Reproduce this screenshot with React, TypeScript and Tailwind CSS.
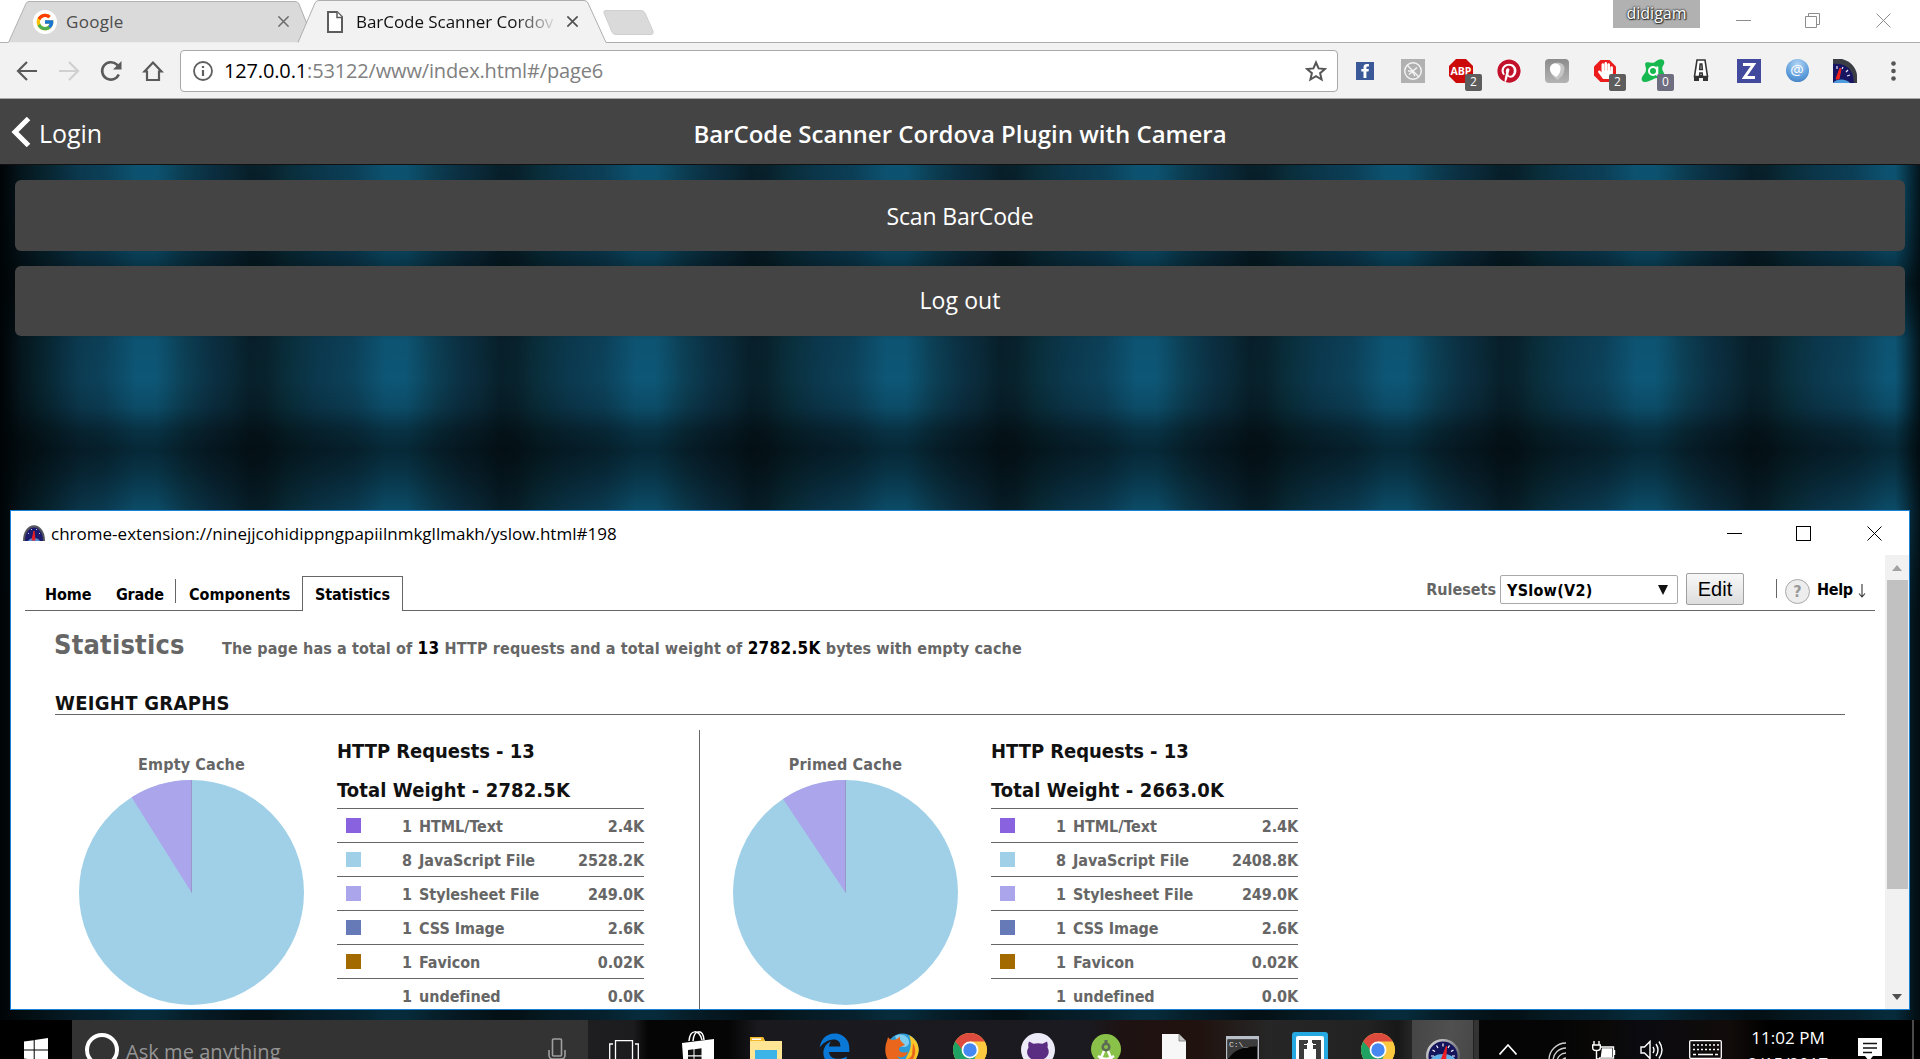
import type { ReactNode } from "react";
import { FcGoogle } from "react-icons/fc";
import { FaEdgeLegacy, FaPinterest, FaHandPaper } from "react-icons/fa";

/* ---------- shared drawings ---------- */

function Gauge({ className, id }: { className?: string; id: string }) {
  return (
    <svg viewBox="0 0 34 34" className={className}>
      <defs>
        <linearGradient id={id} x1="0" y1="0" x2="1" y2="1">
          <stop offset="0" stopColor="#e8e8e8" />
          <stop offset="0.5" stopColor="#8b8d92" />
          <stop offset="1" stopColor="#3b3d44" />
        </linearGradient>
      </defs>
      <circle cx="17" cy="17" r="17" fill={`url(#${id})`} />
      <circle cx="17" cy="17" r="14.5" fill="#14145c" />
      <path d="M4 23a13 8 0 0 1 26 0a14 14 0 0 1-26 0z" fill="#5fb0e6" />
      <g stroke="#fff" strokeWidth="1.2">
        <path d="M5 17h3M6.500 11l2.500 1.500M10.500 6.500l1.500 2.500M17 4.500v3M23.500 6.500l-1.500 2.500M27.500 11l-2.500 1.500M29 17h-3" />
      </g>
      <path d="M15.500 20L20.500 7l-.8 13z" fill="#f01c24" stroke="#f01c24" />
    </svg>
  );
}

function ChromeLogo({ className }: { className?: string }) {
  return (
    <svg viewBox="0 0 34 34" className={className}>
      <circle cx="17" cy="17" r="17" fill="#fbc93f" />
      <path d="M17 17L2.300 8.500A17 17 0 0 0 17 34l7.400-12.800z" fill="#1ea362" />
      <path d="M17 17H9.600L2.300 8.500A17 17 0 0 1 31.700 8.500H17z" fill="#dd4b3e" />
      <path d="M17 9.500h15.200A17 17 0 0 1 17 34l7-13z" fill="#fbc93f" />
      <circle cx="17" cy="17" r="8.400" fill="#fff" />
      <circle cx="17" cy="17" r="6.700" fill="#4688f1" />
    </svg>
  );
}

function Cross({ className, width = 1 }: { className?: string; width?: number }) {
  return (
    <svg viewBox="0 0 15 15" fill="none" stroke="currentColor" strokeWidth={width} className={className}>
      <path d="M.5.5l14 14M14.500.5l-14 14" />
    </svg>
  );
}

/* ---------- browser chrome ---------- */

function TabStrip() {
  return (
    <div className="relative flex h-[43px] shrink-0 bg-white">
      <svg viewBox="0 0 1920 43" className="absolute left-0 top-0 h-[43px] w-[1920px]" fill="none">
        <path d="M0 42.500H8.500L26 3.500Q27 1.500 29 1.500H295Q298 1.500 299 4L316 42.500Z" fill="#dadada" />
        <path d="M0 42.500H8.500L26 3.500Q27 1.500 29 1.500H295Q298 1.500 299 4L308 27" stroke="#b2b2b2" />
        <path d="M298 43L315 3Q316 .5 319 .5H584Q587 .5 588 3L606 42.500V43Z" fill="#f2f2f2" />
        <path d="M298 42.500L315 3Q316 .5 319 .5H584Q587 .5 588 3L606 42.500H1920" stroke="#aeaeae" />
        <path d="M606 10.500H641Q644 10.500 645 13L653 31Q654 34.500 651 34.500H616Q613 34.500 612 32L604 13Q603 10.500 606 10.500Z" fill="#dadada" stroke="#cfcfcf" />
      </svg>
      <div className="relative flex h-full w-[306px] items-center pl-[33px]">
        <span className="flex size-6 items-center justify-center rounded-full bg-white">
          <FcGoogle className="size-[20px]" />
        </span>
        <span className="ml-[9px] flex-1 text-[17px] tracking-[0.3px] text-[#4c4c4c]">Google</span>
        <Cross width={2} className="mr-[17px] size-[11px] text-[#6a6a6a]" />
      </div>
      <div className="relative flex h-full w-[292px] items-center pl-[21px]">
        <svg viewBox="0 0 16 22" className="h-[22px] w-[16px]" fill="#fff" stroke="#5c5c5c" strokeWidth="2">
          <path d="M1 1h9l5 5v15H1z" />
          <path d="M10 1v5.500h5" strokeWidth="1.500" />
        </svg>
        <span className="ml-[13px] w-[198px] overflow-hidden whitespace-nowrap bg-[linear-gradient(90deg,#111_80%,#dadada_100%)] bg-clip-text text-[17px] tracking-[-0.05px] text-transparent">
          BarCode Scanner Cordov
        </span>
        <Cross width={2.2} className="ml-[13px] size-[11px] text-[#505050]" />
      </div>
      <div className="relative ml-auto flex h-[42px] text-[#8d8d8d]">
        <div className="mr-[36px] h-7 w-[87px] bg-[#b1b1b1] text-center text-[16px] leading-[26px] text-white [text-shadow:0_0_2px_#222,0_0_2px_#222,1px_1px_1px_#333]">
          didigam
        </div>
        <div className="mt-5 h-px w-[15px] bg-[#8d8d8d]" />
        <svg viewBox="0 0 15 15" className="ml-[54px] mt-[13px] size-[15px]" fill="none" stroke="currentColor">
          <path d="M.5 3.500h11v11H.5zM3.500 3.500v-3h11v11h-3" />
        </svg>
        <Cross className="ml-[56px] mr-[29px] mt-[13px] size-[15px]" />
      </div>
    </div>
  );
}

function Badge({ children, tone }: { children: ReactNode; tone?: string }) {
  return (
    <span className={`absolute left-[28px] top-[15px] flex h-[17px] w-[17px] items-center justify-center rounded-[2px] text-[12px] leading-none text-white ${tone ?? "bg-[#5d5d5d]"}`}>
      {children}
    </span>
  );
}

function Ext({ children }: { children: ReactNode }) {
  return <div className="relative flex h-6 w-12 shrink-0 items-center justify-center">{children}</div>;
}

function Toolbar() {
  return (
    <div className="flex h-[56px] shrink-0 items-center border-b border-[#a9a9a9] bg-[#f2f2f2]">
      <div className="flex w-[180px] shrink-0 items-center pl-[16px] text-[#5a5a5a]">
        <svg viewBox="0 0 22 22" className="size-[22px]" fill="none" stroke="currentColor" strokeWidth="2.200">
          <path d="M21 11H2.500M11 2l-9 9 9 9" />
        </svg>
        <svg viewBox="0 0 22 22" className="ml-[20px] size-[22px] text-[#d0d0d0]" fill="none" stroke="currentColor" strokeWidth="2.200">
          <path d="M1 11h18.500M11 2l9 9-9 9" />
        </svg>
        <svg viewBox="0 0 22 22" className="ml-[20px] size-[22px]" fill="none" stroke="currentColor" strokeWidth="2.600">
          <path d="M18.800 14.500A8.700 8.700 0 1 1 17 4.700L18.500 6.500" />
          <path d="M21.500 1v8.500H13z" fill="currentColor" stroke="none" />
        </svg>
        <svg viewBox="0 0 22 22" className="ml-[20px] size-[22px]" fill="none" stroke="currentColor" strokeWidth="2.200">
          <path d="M11 2.500L2.500 11.500H5V20h12v-8.500h2.500z" />
        </svg>
      </div>
      <div className="flex h-[42px] flex-1 items-center rounded-[4px] border border-[#a8a8a8] bg-white pl-[12px] pr-[10px]">
        <svg viewBox="0 0 20 20" className="size-[20px]" fill="none" stroke="#5f5f5f" strokeWidth="1.800">
          <circle cx="10" cy="10" r="9" />
          <path d="M10 9v6M10 5v2" strokeWidth="2.200" />
        </svg>
        <span className="ml-[11px] flex-1 text-[20px] tracking-[-0.15px] text-[#808080]">
          <span className="text-black">127.0.0.1</span>:53122/www/index.html#/page6
        </span>
        <svg viewBox="0 0 22 22" className="size-[22px]" fill="none" stroke="#555" strokeWidth="2">
          <path d="M11 2.500l2.600 5.900 6.400.6-4.900 4.200 1.500 6.300L11 16.200l-5.600 3.300 1.500-6.300L2 9l6.400-.6z" />
        </svg>
      </div>
      <div className="ml-[3px] flex w-[579px] shrink-0">
        <Ext>
          <svg viewBox="0 0 18 18" className="size-[18px]">
            <path fill="#3b5998" d="M0 0h18v18H0z" />
            <path fill="#fff" d="M7.500 16V9.500H5.300V7h2.200V5.300C7.500 3.200 8.800 2 10.900 2h2v2.400h-1.300c-.9 0-1.200.4-1.200 1.100V7h2.500l-.4 2.500h-2.100V16z" />
          </svg>
        </Ext>
        <Ext>
          <svg viewBox="0 0 24 24" className="size-6" fill="none" stroke="#f4f4f4" strokeWidth="1.400">
            <path fill="#b1b1b1" stroke="none" d="M0 0h24v24H0z" />
            <circle cx="12" cy="12" r="8.300" />
            <path d="M6 6l12 12M8 15.500l4-3.500 4-3.500M7 12h4l3 5" />
          </svg>
        </Ext>
        <Ext>
          <svg viewBox="0 0 24 24" className="size-6">
            <path fill="#cc0a0a" d="M7 0h10l7 7v10l-7 7H7l-7-7V7z" />
            <text x="12" y="16" fill="#fff" fontSize="11" fontWeight="700" textAnchor="middle" fontFamily="Open Sans, sans-serif" textLength="21" lengthAdjust="spacingAndGlyphs">ABP</text>
          </svg>
          <Badge>2</Badge>
        </Ext>
        <Ext>
          <span className="flex size-6 items-center justify-center rounded-full bg-white">
            <FaPinterest className="size-6 text-[#c2112b]" />
          </span>
        </Ext>
        <Ext>
          <span className="flex size-6 items-center justify-center rounded-[4px] bg-[linear-gradient(180deg,#8c8c8c,#b4b4b4)]">
            <svg viewBox="0 0 24 24" className="size-6">
              <path d="M5 10C5 2 19 2 19.500 9c0 6-3 9-7 12C8 18 5 14 5 10z" fill="#c6c6c6" />
              <path d="M5 10C5 3 14 3 15.500 8c.5 4-1 7-4 10C7.500 16 5 13 5 10z" fill="#fff" />
            </svg>
          </span>
        </Ext>
        <Ext>
          <svg viewBox="0 0 24 24" className="absolute size-6">
            <path fill="#ec1c1c" d="M7.500 1h9L23 7.500v9L16.500 23h-9L1 16.500v-9z" />
          </svg>
          <FaHandPaper className="relative size-[17px] text-white" />
          <Badge>2</Badge>
        </Ext>
        <Ext>
          <svg viewBox="0 0 24 24" className="size-6" fill="none">
            <path fill="#16b850" d="M5 3.500c2-1 4 .5 7 .3 2 0 4-3.500 8-3.600 3.500 0 4 3.500 2.500 5.800-1.500 2-2 4 0 7 2 4 1 7-1 7s-5-2-8-.5S6 23.500 3 23c-3-1-3-4-1-6.500s3-3.500 3-6.500-2-5 0-6.500z" />
            <circle cx="12" cy="12" r="4" stroke="#fff" strokeWidth="2" />
            <path d="M16.300 7.500V17" stroke="#fff" strokeWidth="2" />
          </svg>
          <Badge tone="bg-[#6e6e80]">0</Badge>
        </Ext>
        <Ext>
          <svg viewBox="0 0 18 24" className="h-6 w-[18px]">
            <path fill="#333" d="M2 16h14v6h-5v-3H7v3H2z" />
            <path fill="#fff" stroke="#333" strokeWidth="1.600" d="M5 1h8l2.500 16.500h-5l-.4-3.500H7.900l-.4 3.500h-5zM8.200 5l-.5 5.500h2.600L9.800 5z" />
          </svg>
        </Ext>
        <Ext>
          <span className="flex size-6 items-center justify-center bg-[#414a9c]">
            <svg viewBox="0 0 14 16" className="h-4 w-3.5" fill="none" stroke="#fff" strokeWidth="3">
              <path d="M1 1.500h10.500L2.500 14.500H13" />
            </svg>
          </span>
        </Ext>
        <Ext>
          <span className="flex size-[23px] items-center justify-center rounded-full bg-[radial-gradient(circle_at_50%_25%,#b5d7f5,#5d9ddb_60%,#3c74b8)] pb-[2px] text-[15px] leading-none text-white">@</span>
        </Ext>
        <Ext>
          <svg viewBox="0 0 24 24" className="size-6">
            <path d="M0 24V0h9C17 2 23 8 24 16v8z" fill="#3b3f45" />
            <path d="M0 24V5c11-1 18 4 20 12l1 7z" fill="#171461" />
            <path d="M0 24c4-5 14-4 17 0z" fill="#4d9bdc" />
            <path d="M3 20L7 9l1 1-2 10z" fill="#f02020" stroke="#f02020" />
            <path d="M4 7v3M10 8l-1 2M15 11l-2 2M17 16l-3 1" stroke="#e8e8ff" strokeWidth="1.200" />
          </svg>
        </Ext>
        <Ext>
          <svg viewBox="0 0 5 20" className="h-5 w-[5px]" fill="#555">
            <circle cx="2.500" cy="2.500" r="2.300" />
            <circle cx="2.500" cy="10" r="2.300" />
            <circle cx="2.500" cy="17.500" r="2.300" />
          </svg>
        </Ext>
      </div>
    </div>
  );
}

/* ---------- web page behind the popup ---------- */

function WebPage() {
  return (
    <div className="flex min-h-0 flex-1 flex-col">
      <header className="relative flex h-[66px] shrink-0 items-center border-b border-[#111] bg-[#444] text-white">
        <svg viewBox="0 0 20 30" className="ml-[11px] h-[30px] w-[20px]" fill="none" stroke="#fff" strokeWidth="5">
          <path d="M17.500 1.500L4 15l13.500 13.500" />
        </svg>
        <span className="ml-[8px] mt-[5px] w-[81px] text-[25px] tracking-[-0.05px]">Login</span>
        <h1 className="mr-[120px] mt-[5px] flex-1 text-center text-[24px] font-semibold">BarCode Scanner Cordova Plugin with Camera</h1>
      </header>
      <div className="flex-1 bg-[linear-gradient(90deg,rgba(0,4,6,1)_0px,rgba(0,4,6,0.45)_20px,rgba(0,4,6,0)_80px,rgba(0,4,6,0)_1895px,rgba(0,4,6,0.75)_1920px),linear-gradient(180deg,rgba(0,0,0,0.04)_0px,rgba(0,0,0,0.08)_40px,rgba(0,0,0,0.25)_86px,rgba(0,0,0,0.55)_118px,rgba(0,0,0,0.3)_150px,rgba(0,0,0,0.03)_175px,rgba(0,0,0,0)_215px,rgba(0,0,0,0.12)_242px,rgba(0,0,0,0.42)_265px,rgba(0,0,0,0.53)_285px,rgba(0,0,0,0.4)_308px,rgba(0,0,0,0.12)_345px,rgba(0,0,0,0.5)_450px,rgba(0,0,0,0.5)_855px),repeating-linear-gradient(90deg,#07202b_0px,#08222d_16px,#092f3c_38px,#0b384d_66px,#0c425b_104px,#0d5675_136px,#0d5675_156px,#0c3f54_186px,#0b3043_212px,#0a2a39_230px,#07202b_250px)]">
        <div className="flex flex-col gap-[15px] p-[15px] text-[23px] text-white">
          <div className="flex h-[71px] items-center justify-center rounded-[6px] bg-[#444] pt-[2px] tracking-[-0.15px]">Scan BarCode</div>
          <div className="flex h-[70px] items-center justify-center rounded-[6px] bg-[#444] pb-px tracking-[0.1px]">Log out</div>
        </div>
      </div>
    </div>
  );
}

/* ---------- YSlow popup ---------- */

type Row = [color: string, count: string, label: string, size: string];

const common: Row[] = [
  ["bg-[#aba5eb]", "1", "Stylesheet File", "249.0K"],
  ["bg-[#667ab7]", "1", "CSS Image", "2.6K"],
  ["bg-[#a36a00]", "1", "Favicon", "0.02K"],
  ["bg-white", "1", "undefined", "0.0K"],
];

function CachePanel({ title, total, js, slice }: { title: string; total: string; js: string; slice: string }) {
  const rows: Row[] = [["bg-[#8963df]", "1", "HTML/Text", "2.4K"], ["bg-[#a0d0e8]", "8", "JavaScript File", js], ...common];
  return (
    <div className="flex">
      <div className="ml-[24px] w-[225px] pt-[22px]">
        <div className="h-[28px] text-center text-[16px] leading-[26px] tracking-[0.15px] text-[#666]">{title}</div>
        <svg viewBox="0 0 225 225" className="size-[225px]">
          <circle cx="112.500" cy="112.500" r="112.500" fill="#a0d0e8" />
          <path d={slice} fill="#aba5eb" />
          <path d="M112.500 112.500V0" stroke="#9a97cb" />
        </svg>
      </div>
      <div className="ml-[33px] w-[307px]">
        <div className="h-[39px] text-[20px] leading-[43px] tracking-[-0.05px] text-[#111]">HTTP Requests - 13</div>
        <div className="h-[39px] text-[20px] leading-[43px] tracking-[0.12px] text-[#111]">Total Weight - {total}</div>
        {rows.map(([color, count, label, size]) => (
          <div key={label} className="flex h-[34px] items-center border-t border-[#666] text-[16px] leading-[24px] text-[#666]">
            <span className={`ml-[9px] size-[15px] ${color}`} />
            <span className="w-[51px] pt-[2px] text-right">{count}</span>
            <span className="ml-[7px] flex-1 pt-[2px] tracking-[-0.05px]">{label}</span>
            <span className="pt-[2px] tracking-[-0.1px]">{size}</span>
          </div>
        ))}
      </div>
    </div>
  );
}

function YSlowWindow() {
  return (
    <div className="absolute left-[10px] top-[510px] flex h-[500px] w-[1900px] flex-col border border-[#1a82d6] bg-white">
      <div className="flex h-[44px] shrink-0 items-center pl-[12px] text-[17px] text-black">
        <svg viewBox="0 0 22 16" className="h-4 w-[22px]">
          <path d="M0 16C0-5 22-5 22 16z" fill="#55565e" />
          <path d="M2 16C2-2 20-2 20 16z" fill="#1d1b6d" />
          <path d="M5 16c2-4 10-4 12 0z" fill="#5a8fd6" />
          <path d="M9 15l2-9 1 9z" fill="#e61e28" stroke="#e61e28" />
          <path d="M5 8l1 1M8 4l1 1M14 4l-1 1M17 8l-1 1" stroke="#c9c9ee" />
        </svg>
        <span className="ml-[6px] mt-[2px] flex-1 tracking-[0.015px]">chrome-extension://ninejjcohidippngpapiilnmkgllmakh/yslow.html#198</span>
        <span className="h-px w-[15px] bg-black" />
        <span className="ml-[54px] size-[15px] border border-black" />
        <Cross className="ml-[56px] mr-[27px] size-[15px]" />
      </div>
      <div className="flex min-h-0 flex-1">
        <div className="h-full flex-1 overflow-hidden font-['DejaVu_Sans_Condensed','Noto_Sans',sans-serif] font-bold">
          <div className="ml-[14px] flex h-[56px] w-[1850px] items-end border-b border-[#666] text-[16px] leading-[24px] text-black">
            <span className="ml-[20px] mb-[3px] w-[46px] tracking-[-0.1px]">Home</span>
            <span className="ml-[25px] mb-[3px] w-[48px] tracking-[-0.2px]">Grade</span>
            <span className="mb-[7px] ml-[11px] h-[24px] w-px bg-[#666]" />
            <span className="ml-[13px] mb-[3px] w-[101px]">Components</span>
            <span className="-mb-px ml-[12px] flex h-[35px] w-[101px] justify-center border border-b-0 border-[#666] bg-white pt-[6px] tracking-[-0.15px]">Statistics</span>
            <div className="ml-auto flex h-full">
              <span className="mr-[4px] mt-[23px] text-[#666]">Rulesets</span>
              <span className="mt-[20px] flex h-[29px] w-[178px] items-center justify-between rounded-[2px] border border-[#a9a9a9] pl-[6px] pr-[9px]">
                <span className="pt-[2px] tracking-[0.25px]">YSlow(V2)</span>
                <svg viewBox="0 0 10 10" className="size-[10px]"><path d="M0 0h10L5 10z" fill="#111" /></svg>
              </span>
              <span className="ml-[8px] mt-[18px] flex h-[32px] w-[58px] items-center justify-center rounded-[2px] border border-[#a0a0a0] bg-[linear-gradient(180deg,#f8f8f8,#dddddd)] font-['Liberation_Sans',sans-serif] text-[20px] font-normal">Edit</span>
              <span className="ml-[32px] mt-[24px] h-[19px] w-px bg-[#666]" />
              <span className="ml-[8px] mt-[24px] flex size-[25px] items-center justify-center rounded-full border border-[#a8a8a8] bg-[#ededed] text-[#999]">?</span>
              <span className="ml-[7px] mt-[23px] w-[38px] tracking-[-0.3px]">Help</span>
              <svg viewBox="0 0 8 14" className="ml-[3px] mr-[9px] mt-[29px] h-[14px] w-[8px]" fill="none" stroke="#333" strokeWidth="1.100">
                <path d="M4 0v12.500M1 9.500l3 3.500 3-3.500" />
              </svg>
            </div>
          </div>
          <div className="ml-[43px] flex h-[66px] items-baseline pt-[15px] text-[#666]">
            <span className="w-[168px] text-[27px] leading-[38px] tracking-[0.2px]">Statistics</span>
            <p className="whitespace-nowrap text-[16px] tracking-[0.12px]">
              The page has a total of <span className="text-[17px] tracking-[0.3px] text-black">13</span> HTTP requests and a total weight of{" "}
              <span className="text-[17px] tracking-[0.3px] text-black">2782.5K</span> bytes with empty cache
            </p>
          </div>
          <h2 className="ml-[44px] mt-[12px] h-[26px] w-[1790px] border-b border-[#666] text-[20px] leading-[29px] tracking-[0.3px] text-[#111]">WEIGHT GRAPHS</h2>
          <div className="ml-[44px] mt-[15px] flex h-[400px]">
            <div className="w-[645px] border-r border-[#666]">
              <CachePanel title="Empty Cache" total="2782.5K" js="2528.2K" slice="M112.500 112.500L52.600 17.300A112.500 112.500 0 0 1 112.500 0z" />
            </div>
            <div className="ml-[9px]">
              <CachePanel title="Primed Cache" total="2663.0K" js="2408.8K" slice="M112.500 112.500L50.100 18.900A112.500 112.500 0 0 1 112.500 0z" />
            </div>
          </div>
        </div>
        <div className="flex w-[24px] flex-col items-center justify-between bg-[#f1f1f1]">
          <div className="flex w-full flex-col items-end">
            <div className="flex h-[25px] w-full items-center justify-center">
              <svg viewBox="0 0 10 6" className="h-[6px] w-[10px]"><path d="M0 6l5-6 5 6z" fill="#a3a3a3" /></svg>
            </div>
            <div className="mr-px h-[309px] w-[21px] bg-[#c1c1c1]" />
          </div>
          <svg viewBox="0 0 10 6" className="mb-[9px] h-[6px] w-[10px]"><path d="M0 0l5 6 5-6z" fill="#505050" /></svg>
        </div>
      </div>
    </div>
  );
}

/* ---------- taskbar ---------- */

function Slot({ children }: { children: ReactNode }) {
  return <div className="flex w-[68px] shrink-0 justify-center">{children}</div>;
}

function Taskbar() {
  return (
    <div className="flex h-[39px] shrink-0 items-start overflow-hidden bg-black text-white">
      <div className="flex w-[72px] shrink-0 justify-center pt-[18px]">
        <svg viewBox="0 0 24 24" className="size-6" fill="#fff">
          <path d="M0 3.500l9.700-1.300v9.200H0zM10.700 2l13.300-2v11.400H10.700zM0 12.600h9.700v9.200L0 20.500zM10.700 12.600H24V24l-13.300-2z" />
        </svg>
      </div>
      <div className="flex h-full w-[516px] shrink-0 bg-[#333]">
        <div className="ml-[13px] mt-[13px] size-[34px] shrink-0 rounded-full border-[4px] border-white" />
        <span className="ml-[7px] mt-[18px] h-[30px] flex-1 text-[20px] leading-[28px] tracking-[0.05px] text-[#959595]">Ask me anything</span>
        <svg viewBox="0 0 18 26" className="mr-[22px] mt-[18px] h-[26px] w-[18px]" fill="none" stroke="#a0a0a0" strokeWidth="1.600">
          <rect x="4.500" y="1" width="9" height="17" rx="1" />
          <path d="M1 12v5q0 4 4 4h8q4 0 4-4v-5M9 21v5" />
        </svg>
      </div>
      <div className="flex h-full shrink-0 bg-[linear-gradient(90deg,#1e1e20_0px,#1c1c1e_45px,#050505_60px,#050505_140px,#19191e_170px,#1a1a20_500px,#1e1212_535px,#20120e_610px,#262626_680px,#222_780px,#181818_810px,#262626_824px)]">
        <div className="flex w-[76px] justify-center pr-[4px] pt-[20px]">
          <svg viewBox="0 0 30 26" className="h-[26px] w-[30px]" fill="none" stroke="#fff" strokeWidth="1.300">
            <path d="M6.500 25V.7h17V25M4 4H.7v18H4M26 4h3.300v18H26" />
          </svg>
        </div>
        <Slot>
          <svg viewBox="0 0 32 42" className="mt-[10px] h-[42px] w-8">
            <path d="M7 11C8-1 17-1 20 10M11 11C12-1 21-1 22 10" fill="none" stroke="#fff" strokeWidth="1.500" />
            <path d="M0 13L32 9v33H2z" fill="#fff" />
            <path d="M6 20l5.500-.7v6H6zM12.500 19.200l7-.9v7h-7zM6 26.500h5.500v5.800L6 31.600zM12.500 26.500h7v6.800l-7-.9z" fill="#111" />
          </svg>
        </Slot>
        <Slot>
          <svg viewBox="0 0 32 30" className="mt-[17px] h-[30px] w-8">
            <path d="M0 0h13l2 4h17v26H0z" fill="#ffe594" />
            <path d="M0 0h13l2 4H0z" fill="#f4b92a" />
            <path d="M2 1.500h9v1.500H2z" fill="#fff" />
            <path d="M5 13h22v17h-5v-7H10v7H5z" fill="#3cb4e8" />
          </svg>
        </Slot>
        <Slot><FaEdgeLegacy className="mt-[13px] size-[33px] text-[#0a78d7]" /></Slot>
        <Slot>
          <svg viewBox="0 0 34 34" className="mt-[13px] size-[34px]">
            <circle cx="17.500" cy="16.500" r="16" fill="#2d9bd5" />
            <path d="M10 3c6-4 14 0 14 6s-7 6-10 3z" fill="#7ccdf0" />
            <path d="M24 2c9 5 12 14 8 22-3 7-9 10-15 10l6-13c3-5 4-12 1-19z" fill="#f8c627" />
            <path d="M3 4c1 2 3 3 6 3 3-1 5-2 6-4-1 5 3 7 5 9-3 1-6 2-6 4 0 4 5 4 9 3-2 6-9 6-11 4 3 6 12 5 15-1l1-12c3 5 3 11 0 16-3 6-8 8-12 8C6 34-1 25 .5 14c0-3 2-7 2.500-10z" fill="#e9661c" />
          </svg>
        </Slot>
        <Slot><ChromeLogo className="mt-[13px] size-[34px]" /></Slot>
        <Slot>
          <span className="mt-[13px] flex size-[34px] items-center justify-center overflow-hidden rounded-full bg-[#eceaf6]">
            <svg viewBox="0 0 34 34" className="size-[34px]">
              <path d="M8 8.500l4.500 2.300c3-.8 6-.8 9 0L26 8.500c1 3 .8 4 .5 6 2 3 1.500 7-1 9.500-2 2-4 2.500-6 3v7h-5v-7c-3-.5-5-1-6.500-3-2.500-3-2.500-6.500-.5-9.500-.3-2-.5-3 .5-6z" fill="#5b2d82" />
            </svg>
          </span>
        </Slot>
        <Slot>
          <svg viewBox="0 0 30 34" className="mt-[13px] h-[34px] w-[30px]">
            <circle cx="15" cy="16" r="15" fill="#8ac249" />
            <path d="M13.500 7h3v5h-3z" fill="#5b6b54" />
            <circle cx="15" cy="14" r="3.300" fill="none" stroke="#5b6b54" strokeWidth="2.500" />
            <path d="M13 18L7 32M17 18l6 14M7 23q8 6 16 0" fill="none" stroke="#fff" strokeWidth="2.500" />
          </svg>
        </Slot>
        <Slot>
          <svg viewBox="0 0 24 32" className="mt-[14px] h-8 w-6">
            <path d="M0 0h17l7 7v25H0z" fill="#f7f7f7" />
            <path d="M17 0v7h7z" fill="#c8c8c8" stroke="#777" strokeWidth=".8" />
          </svg>
        </Slot>
        <Slot>
          <svg viewBox="0 0 33 28" className="mt-[16px] h-7 w-[33px]">
            <path d="M0 0h33v28H0z" fill="#b9bfc8" />
            <path d="M1.500 3.500h30V28h-30z" fill="#050505" />
            <path d="M1.500 3.500h30v7C18 10 8 14 3 22H1.500z" fill="#3c3c3c" />
            <text x="3" y="11" fill="#ddd" fontSize="8" fontFamily="Liberation Mono, monospace">C:\_</text>
          </svg>
        </Slot>
        <Slot>
          <svg viewBox="0 0 36 36" className="mt-[12px] size-9">
            <rect width="36" height="36" rx="3" fill="#26a9e0" />
            <rect x="4" y="4" width="28" height="36" rx="2" fill="#fff" />
            <path d="M7 8h22v32H7z" fill="#3b3b3b" />
            <path d="M16 8h4v4h-4zM12 12h3v-1h6v1h3v1h-3v4h3v10h-3v9h-6v-9h-3V17h3v-4h-3z" fill="#fff" />
          </svg>
        </Slot>
        <Slot><ChromeLogo className="mt-[13px] size-[34px]" /></Slot>
      </div>
      <div className="flex h-full w-[61px] shrink-0 justify-center bg-[linear-gradient(100deg,#454545,#505050_60%,#474747)]">
        <Gauge id="rim-task" className="mt-[19px] size-[34px]" />
      </div>
      <div className="h-full w-[6px] shrink-0 border-l border-[#222] bg-[#333]" />
      <div className="flex h-full flex-1 bg-[linear-gradient(90deg,#050505_0px,#050505_80px,#0b0908_130px,#0a0a10_160px,#110c0a_250px,#000_290px)]">
        <svg viewBox="0 0 18 11" className="ml-[20px] mt-[24px] h-[11px] w-[18px]" fill="none" stroke="#fff" strokeWidth="1.600"><path d="M.5 10.500L9 1l8.500 9.500" /></svg>
        <svg viewBox="0 0 18 22" className="ml-[31px] mt-[22px] h-[22px] w-[18px]" fill="none" stroke="#d0d0d0" strokeWidth="1.300">
          <path d="M1 18A17 17 0 0 1 18 1M5 19A13 13 0 0 1 18 6M9 20a9 9 0 0 1 9-9M13 21a6 6 0 0 1 5-5" />
        </svg>
        <svg viewBox="0 0 24 22" className="ml-[26px] mt-[21px] h-[22px] w-6" fill="none" stroke="#fff" strokeWidth="1.400">
          <path d="M2 0v4M7 0v4M.7 4h7.600v3q0 2.500-3.800 2.500T.7 7zM4.500 9.500V18H8M9 6h12.500v11H7M22.500 9v5" />
          <path d="M10.500 8h9v7.500h-10z" fill="#fff" />
        </svg>
        <svg viewBox="0 0 24 24" className="ml-[24px] mt-[18px] size-6" fill="none" stroke="#fff" strokeWidth="1.400">
          <path d="M1 9h3.500L10 3.500v17L4.500 15H1zM13 9q2 3 0 6M16 6q4 6 0 12M19 3.500q6 8.500 0 17" />
        </svg>
        <svg viewBox="0 0 33 19" className="ml-[25px] mt-[20px] h-[19px] w-[33px]" fill="none" stroke="#fff" strokeWidth="1.300">
          <rect x=".7" y=".7" width="31.600" height="17.600" rx="1" />
          <path d="M4 5h26M4 9.500h26" strokeDasharray="2 2" />
          <path d="M4 14.500h3M9 14.500h15M26 14.500h3" />
        </svg>
        <div className="ml-[20px] w-[92px] whitespace-nowrap text-center text-[17px] leading-[24px]">
          <div className="mt-[6px] tracking-[0.05px]">11:02 PM</div>
          <div className="mt-[2px]">2/15/2017</div>
        </div>
        <svg viewBox="0 0 24 28" className="ml-[24px] mt-[18px] h-7 w-6">
          <path d="M0 0h24v18h-9l-4 5-4-5H0z" fill="#fff" />
          <path d="M5 5.500h14M5 10h14M5 14.500h9" stroke="#111" strokeWidth="1.500" />
        </svg>
        <div className="ml-auto mr-[6px] h-full w-[2px] bg-[#4a4a4a]" />
      </div>
    </div>
  );
}

export default function App() {
  return (
    <div className="relative flex h-[1059px] w-[1920px] flex-col overflow-hidden bg-black font-['Open_Sans',sans-serif]">
      <TabStrip />
      <Toolbar />
      <WebPage />
      <Taskbar />
      <YSlowWindow />
    </div>
  );
}
